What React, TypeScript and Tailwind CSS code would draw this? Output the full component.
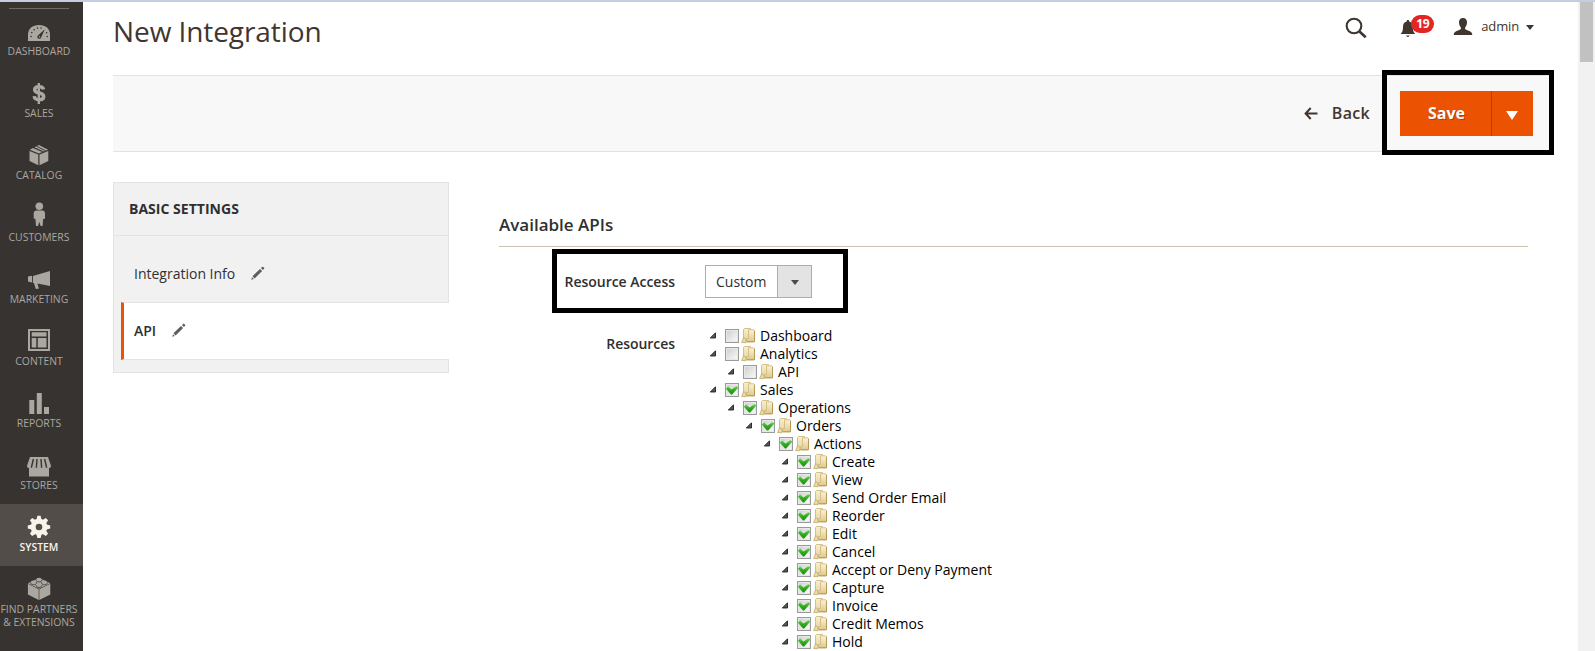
import type { ReactNode } from 'react';

const FONT = "font-['Open_Sans','Noto_Sans',sans-serif]";

type NavItem = { label: string; icon: ReactNode; active?: boolean; labelClass: string };

const DashboardIcon = () => (
  <svg width="24" height="26" viewBox="0 0 24 26" fill="currentColor">
    <path fillRule="evenodd" d="M1 25V18.500C1 12.800 5.500 9 12 9s11 3.800 11 9.500V25Z" />
    <g fill="#373330">
      <circle cx="4" cy="20.500" r=".8" />
      <circle cx="4.800" cy="16.600" r=".8" />
      <circle cx="7.200" cy="13.700" r=".8" />
      <circle cx="10.500" cy="12" r=".8" />
      <circle cx="14" cy="12" r=".8" />
      <circle cx="19.600" cy="16.800" r=".8" />
      <circle cx="20.200" cy="20.500" r=".8" />
      <path d="M17.800 13.200 14.200 21.200a1.900 1.900 0 1 1-3.200-1.800Z" />
    </g>
    <circle cx="12.500" cy="20.700" r=".7" />
  </svg>
);

const SalesIcon = () => (
  <svg width="24" height="26" viewBox="0 0 24 26" fill="none" stroke="currentColor">
    <path strokeWidth="3.500" d="M16.500 11.600C16.200 9.600 14.600 8.700 12 8.700c-2.800 0-4.300 1.100-4.300 3 0 2.200 2.100 2.700 4.500 3.300 2.600.6 4.500 1.200 4.500 3.500 0 2-1.700 3.200-4.500 3.200-3 0-4.700-1-5-3.600" />
    <path strokeWidth="2.400" d="M11.800 5v21" />
  </svg>
);

const CatalogIcon = () => (
  <svg width="24" height="26" viewBox="0 0 24 26" fill="currentColor">
    <path d="M2.500 10.900 11.300 14.600V25.300L2.500 21ZM21.300 10.900 12.500 14.600V25.300l8.800-4.300Z" />
    <path d="m2.800 9.700 3.200-1.700 9.200 4-3.300 1.500ZM7.400 7.300 12 5l9.100 4.700-4.300 1.700Z" />
    <path fill="#373330" d="m9.200 6.400.8-.4 9 4.500-.9.400Z" />
  </svg>
);

const CustomersIcon = () => (
  <svg width="24" height="26" viewBox="0 0 24 26" fill="currentColor">
    <circle cx="12.300" cy="4.300" r="3.800" />
    <path d="M9.600 8.500h5.800c1.700 0 2.600 1.200 2.600 3v5.300h-1.800L15.600 24h-2l-1.300-4.300L11 24H9l-.600-7.200H6.700v-5.300c0-1.800 1.100-3 2.900-3Z" />
  </svg>
);

const MarketingIcon = () => (
  <svg width="24" height="26" viewBox="0 0 24 26" fill="currentColor">
    <path d="M23 7v15L10.500 19.400l.6 2.900 1 2.300-3.300.5-1.900-6-1-.2v-6.800Z" />
    <path d="M5 11.800v6.600l-4-.8v-5Z" />
  </svg>
);

const ContentIcon = () => (
  <svg width="24" height="26" viewBox="0 0 24 26" fill="currentColor">
    <path fillRule="evenodd" d="M1 3h22v22H1Zm2 2v18h18V5Z" />
    <path d="M4.700 6.300h14.800v4.200H4.700ZM4.700 12h4.600v9.500H4.700ZM10.800 12h8.700v9.500h-8.700Z" />
  </svg>
);

const ReportsIcon = () => (
  <svg width="24" height="26" viewBox="0 0 24 26" fill="currentColor">
    <path d="M2.300 12h5V26h-5ZM9.800 5h5v21h-5ZM17 19h5v7h-5Z" />
  </svg>
);

const StoresIcon = () => (
  <svg width="26" height="28" viewBox="0 0 26 28" fill="currentColor">
    <path d="M4 7h18l3 8.800c.3 2.300-3.300 3.200-4.500 1.200-1.100 1.600-3.700 1.600-5 0-1.200 1.600-3.800 1.600-5 0-1.300 1.600-3.900 1.600-5 0C4.300 19 .7 18.100 1 15.800Z" />
    <path d="M3 18h20v8.500H3Z" />
    <g stroke="#373330" strokeWidth="1.400">
      <path d="M7.400 9 5.500 17M11 9l-.6 8M15 9l.6 8M18.600 9l1.900 8" />
    </g>
  </svg>
);

const SystemIcon = () => (
  <svg width="24" height="26" viewBox="0 0 24 26">
    <g fill="currentColor">
      <path d="m9.500 7.500.9-3.700h3.200l.9 3.700v15l-.9 3.700h-3.200l-.9-3.700Z" />
      <path d="m9.500 7.500.9-3.700h3.200l.9 3.700v15l-.9 3.700h-3.200l-.9-3.700Z" transform="rotate(45 12 15)" />
      <path d="m9.500 7.500.9-3.700h3.200l.9 3.700v15l-.9 3.700h-3.200l-.9-3.700Z" transform="rotate(90 12 15)" />
      <path d="m9.500 7.500.9-3.700h3.200l.9 3.700v15l-.9 3.700h-3.200l-.9-3.700Z" transform="rotate(135 12 15)" />
      <circle cx="12" cy="15" r="8.300" />
    </g>
    <circle cx="12" cy="15" r="3.300" fill="#524d49" />
  </svg>
);

const PartnersIcon = () => (
  <svg width="24" height="26" viewBox="0 0 24 26" fill="currentColor">
    <path d="m.9 9.800 10.800 5.400V26L.9 20.500ZM23.300 9.800l-11 5.400V26l11-5.500Z" />
    <path d="M.9 9.200 12 4l11.300 5.200L12 14.700Z" />
    <g stroke="#373330" strokeWidth=".8">
      <path d="M9.200 5.500v.8c0 2.200 5.600 2.200 5.600 0v-.8M3.800 8.200V9c0 2.200 5.600 2.200 5.600 0v-.8M14.600 8.200V9c0 2.200 5.600 2.200 5.600 0v-.8M9.200 11v.8c0 2.200 5.600 2.200 5.600 0V11" />
    </g>
    <g>
      <ellipse cx="12" cy="5.300" rx="2.700" ry="1.500" />
      <ellipse cx="6.600" cy="8" rx="2.700" ry="1.500" />
      <ellipse cx="17.400" cy="8" rx="2.700" ry="1.500" />
      <ellipse cx="12" cy="10.800" rx="2.700" ry="1.500" />
    </g>
  </svg>
);

const navItems: NavItem[] = [
  { label: 'DASHBOARD', icon: <DashboardIcon />, labelClass: '' },
  { label: 'SALES', icon: <SalesIcon />, labelClass: '' },
  { label: 'CATALOG', icon: <CatalogIcon />, labelClass: '' },
  { label: 'CUSTOMERS', icon: <CustomersIcon />, labelClass: '' },
  { label: 'MARKETING', icon: <MarketingIcon />, labelClass: '' },
  { label: 'CONTENT', icon: <ContentIcon />, labelClass: '' },
  { label: 'REPORTS', icon: <ReportsIcon />, labelClass: '' },
  { label: 'STORES', icon: <StoresIcon />, labelClass: '' },
  { label: 'SYSTEM', icon: <SystemIcon />, active: true, labelClass: 'font-semibold' },
  { label: 'FIND PARTNERS\n& EXTENSIONS', icon: <PartnersIcon />, labelClass: '' },
];

function Sidebar() {
  return (
    <nav className="flex w-[83px] shrink-0 flex-col bg-[#373330] pt-[6px]">
      {navItems.map((item, i) => (
        <div
          key={item.label}
          className={`relative flex h-[62px] shrink-0 flex-col items-center pr-[5px] pt-[8px] ${
            item.active ? 'bg-[#524d49] text-[#f7f3eb]' : 'text-[#aaa6a0]'
          }`}
        >
          {i === 0 && <span className="absolute left-[9px] top-0 h-px w-[60px] bg-[#736963]" />}
          <span className="flex h-[29px] w-full shrink-0 items-start justify-center">{item.icon}</span>
          <span className={`shrink-0 whitespace-pre text-center text-[10.400px] leading-[13px] ${item.labelClass}`}>
            {item.label}
          </span>
        </div>
      ))}
    </nav>
  );
}

const PencilIcon = () => (
  <svg width="14" height="14" viewBox="0 0 14 14" fill="#5f5c59">
    <path d="M.3 13.700 1 11.200 2.800 13ZM1.500 10.300 9 2.900l2.100 2.100L3.600 12.400ZM9.900 2.100 11.200.9q.5-.5 1 0l.9.9q.5.5 0 1L11.900 4.100Z" />
  </svg>
);

function SettingsPanel() {
  return (
    <aside className="flex h-[191px] w-[336px] shrink-0 flex-col border border-[#e3e3e3] bg-[#f1f1f1] text-[#303030]">
      <div className="flex h-[53px] shrink-0 items-center border-b border-[#e3e3e3] pb-[2px] pl-[15px] text-[14px] font-bold">
        <span className="tracking-[0.02px]">BASIC SETTINGS</span>
      </div>
      <div className="flex h-[66px] shrink-0 items-center pl-[20px] pt-[8px] text-[14px]">
        <span>Integration Info</span>
        <span className="ml-[16px]"><PencilIcon /></span>
      </div>
      <div className="-mr-px ml-[7px] flex h-[58px] shrink-0 items-center border-y border-l-[3px] border-y-[#e3e3e3] border-l-[#eb5202] bg-white pb-[2px] pl-[10px] text-[14px] font-semibold">
        <span>API</span>
        <span className="ml-[16px]"><PencilIcon /></span>
      </div>
    </aside>
  );
}

type TreeNode = { label: string; depth: number; checked: boolean };

const nodes: TreeNode[] = [
  { label: 'Dashboard', depth: 0, checked: false },
  { label: 'Analytics', depth: 0, checked: false },
  { label: 'API', depth: 1, checked: false },
  { label: 'Sales', depth: 0, checked: true },
  { label: 'Operations', depth: 1, checked: true },
  { label: 'Orders', depth: 2, checked: true },
  { label: 'Actions', depth: 3, checked: true },
  { label: 'Create', depth: 4, checked: true },
  { label: 'View', depth: 4, checked: true },
  { label: 'Send Order Email', depth: 4, checked: true },
  { label: 'Reorder', depth: 4, checked: true },
  { label: 'Edit', depth: 4, checked: true },
  { label: 'Cancel', depth: 4, checked: true },
  { label: 'Accept or Deny Payment', depth: 4, checked: true },
  { label: 'Capture', depth: 4, checked: true },
  { label: 'Invoice', depth: 4, checked: true },
  { label: 'Credit Memos', depth: 4, checked: true },
  { label: 'Hold', depth: 4, checked: true },
];

const Expander = () => (
  <svg className="-mt-px shrink-0" width="7" height="7" viewBox="0 0 7 7">
    <path d="M5.500 .8V6H.3Z" fill="#555" stroke="#222" strokeWidth=".9" />
  </svg>
);

const CheckBox = ({ checked }: { checked: boolean }) => (
  <svg className="shrink-0" width="14" height="14" viewBox="0 0 14 14">
    <rect x=".5" y=".5" width="13" height="13" fill="#fff" stroke="#9a9a9a" />
    <rect x="1.500" y="1.500" width="11" height="11" fill="url(#boxFill)" stroke="#e8e8e8" />
    {checked && (
      <path d="M.8 5.400 3.200 3.600l3.300 3L11.400 2.900l1.900 1.600L7.200 11.400H6Z" fill="url(#tickFill)" />
    )}
  </svg>
);

const Folder = () => (
  <svg className="shrink-0" width="15" height="16" viewBox="0 0 15 16">
    <path d="M2.500 1.500 3.500.5H9.500V13H2.500Z" fill="url(#folderBack)" stroke="#c9b272" strokeWidth=".8" />
    <path d="M7.500 1.500h5.500l1 1V13.500l-1 1H5.500V10.500H7.500Z" fill="url(#folderFront)" />
    <path d="M5.500 14V10.500H7.500V1.800h5.500" fill="none" stroke="#cdb67a" strokeWidth=".8" />
    <path d="M13.500 2.500v11.200H6" fill="none" stroke="#b89a55" />
    <path d="M.6 14.500 2.700 9.500 5 11.500v3.200Z" fill="#e9dbab" stroke="#c2a968" strokeWidth=".8" />
  </svg>
);

function ResourceTree() {
  return (
    <ul className="flex flex-col text-[14px] leading-[18px] text-black">
      {nodes.map((n) => (
        <li key={n.label + n.depth} className="flex h-[18px] items-center" style={{ paddingLeft: n.depth * 18 }}>
          <Expander />
          <span className="ml-[8px] flex items-center"><CheckBox checked={n.checked} /></span>
          <span className="ml-[2px] flex items-center"><Folder /></span>
          <span className="ml-[4px] whitespace-nowrap">{n.label}</span>
        </li>
      ))}
    </ul>
  );
}

const Gradients = () => (
  <svg className="absolute" width="0" height="0">
    <defs>
      <linearGradient id="boxFill" x1="0" y1="0" x2="1" y2="1">
        <stop offset="0" stopColor="#cfcfcf" />
        <stop offset="1" stopColor="#fafafa" />
      </linearGradient>
      <linearGradient id="tickFill" x1="0" y1="0" x2="0" y2="1">
        <stop offset="0" stopColor="#7fd36a" />
        <stop offset=".45" stopColor="#2fb21b" />
        <stop offset="1" stopColor="#1d8d10" />
      </linearGradient>
      <linearGradient id="folderBack" x1="0" y1="0" x2="0" y2="1">
        <stop offset="0" stopColor="#f8efcd" />
        <stop offset="1" stopColor="#e6d5a0" />
      </linearGradient>
      <linearGradient id="folderFront" x1="0" y1="0" x2="0" y2="1">
        <stop offset="0" stopColor="#fbf4d8" />
        <stop offset="1" stopColor="#dcc68a" />
      </linearGradient>
    </defs>
  </svg>
);

function Header() {
  return (
    <header className="flex h-[73px] w-[1436px] shrink-0 text-[#41362f]">
      <h1 className="pt-[10px] text-[28px] leading-[38px] tracking-[-0.08px]">New Integration</h1>
      <div className="ml-auto flex items-start">
        <svg className="mt-[15px]" width="23" height="22" viewBox="0 0 23 22" fill="none" stroke="#41362f">
          <circle cx="9" cy="9" r="7.300" strokeWidth="2.100" />
          <path d="m14.200 14.200 6.500 6" strokeWidth="2.700" />
        </svg>
        <div className="relative ml-[32px] mt-[18px] h-[18px] w-[34px]">
          <svg width="16" height="18" viewBox="0 0 16 18" fill="#41362f">
            <path d="M7 0h1.800l.3 1.600c2.600.6 3.700 2.500 3.700 5.300 0 3.600.7 5.300 2.500 7H.5C2.300 12.200 3 10.500 3 6.900c0-2.800 1.100-4.700 3.700-5.300ZM6.200 15.500h3.400c-.2.900-.8 1.400-1.700 1.400s-1.500-.5-1.700-1.400Z" />
          </svg>
          <span className="absolute left-[11px] top-[-5px] flex h-[18px] w-[23px] items-center justify-center rounded-full bg-[#e22626] text-[12px] font-bold leading-none tracking-[-0.3px] text-white">
            19
          </span>
        </div>
        <svg className="ml-[19px] mt-[16px]" width="20" height="17" viewBox="0 0 20 17" fill="#41362f">
          <path d="M10 0c2.700 0 4 1.700 4 4.300 0 2.500-.8 4-1.900 5.100v1.700c.8 1 2.300 1.200 4.300 2 1.900.8 2.800 1.800 2.900 3.900H.7c.1-2.100 1-3.100 2.900-3.900 2-.8 3.500-1 4.300-2V9.400C6.800 8.300 6 6.800 6 4.300 6 1.700 7.300 0 10 0Z" />
        </svg>
        <span className="ml-[8px] mt-[13px] text-[13px] leading-[22px] tracking-[-0.15px]">admin</span>
        <span className="ml-[7px] mr-[15px] mt-[23px] h-0 w-0 border-x-[4px] border-t-[5px] border-x-transparent border-t-[#41362f]" />
      </div>
    </header>
  );
}

function ActionBar() {
  return (
    <div className="relative flex h-[77px] w-[1436px] shrink-0 items-center border-y border-[#e3e3e3] bg-[#f8f8f8] pb-[2px] pr-[16px]">
      <div className="ml-auto flex items-center text-[16px] font-semibold text-[#41362f]">
        <svg className="mt-px" width="14" height="13" viewBox="0 0 14 13" fill="none" stroke="#41362f" strokeWidth="2">
          <path d="M6.700 1 1.600 6.500l5.100 5.500M1.800 6.500H13.500" />
        </svg>
        <span className="ml-[14px] tracking-[0.3px]">Back</span>
      </div>
      <div className="ml-[30px] mt-[1px] flex h-[45px] w-[133px] bg-[#eb5202] text-white">
        <div className="flex w-[91px] items-center justify-center pl-[2px] text-[16px] font-bold [text-shadow:1px_1px_0_rgba(0,0,0,0.25)]">
          <span>Save</span>
        </div>
        <div className="flex flex-1 items-center justify-center border-l border-[#b84002] pr-[1px]">
          <span className="mt-[4px] h-0 w-0 border-x-[6px] border-t-[9px] border-x-transparent border-t-white" />
        </div>
      </div>
      <span className="pointer-events-none absolute -right-[5px] -top-[6px] h-[85px] w-[172px] border-[5px] border-black" />
    </div>
  );
}

function ApiForm() {
  return (
    <section className="flex w-[1029px] flex-col text-[#303030]">
      <h2 className="flex h-[65px] items-end border-b border-[#cac3b4] pb-[9px] text-[17px] font-semibold leading-[24px]">
        <span>Available APIs</span>
      </h2>
      <div className="relative mt-[18px] flex h-[33px] items-center">
        <label className="w-[176px] text-right text-[14px] font-semibold tracking-[-0.02px]">Resource Access</label>
        <div className="ml-[30px] flex h-[33px] w-[107px] border border-[#adadad] bg-white text-[14px]">
          <span className="flex flex-1 items-center pl-[10px]">Custom</span>
          <span className="flex w-[34px] items-center justify-center border-l border-[#adadad] bg-[#e3e3e3]">
            <span className="mt-[2px] h-0 w-0 border-x-[4px] border-t-[5px] border-x-transparent border-t-[#514943]" />
          </span>
        </div>
        <span className="pointer-events-none absolute left-[53px] top-[-16px] h-[64px] w-[296px] border-[5px] border-black" />
      </div>
      <div className="mt-[29px] flex items-start">
        <span className="w-[176px] pt-[7px] text-right text-[14px] font-semibold leading-[20px] tracking-[-0.05px]">Resources</span>
        <div className="ml-[35px]">
          <ResourceTree />
        </div>
      </div>
    </section>
  );
}

export default function App() {
  return (
    <div className={`flex h-[651px] w-[1595px] overflow-hidden border-t-2 border-[#c5cee0] bg-white ${FONT}`}>
      <Gradients />
      <Sidebar />
      <main className="ml-[30px] flex min-w-0 flex-1 flex-col">
        <Header />
        <ActionBar />
        <div className="mt-[30px] flex items-start">
          <SettingsPanel />
          <div className="ml-[50px]">
            <ApiForm />
          </div>
        </div>
      </main>
      <div className="flex w-[17px] shrink-0 justify-center bg-[#f1f1f1]">
        <div className="h-[60px] w-[13px] bg-[#c1c1c1]" />
      </div>
    </div>
  );
}
